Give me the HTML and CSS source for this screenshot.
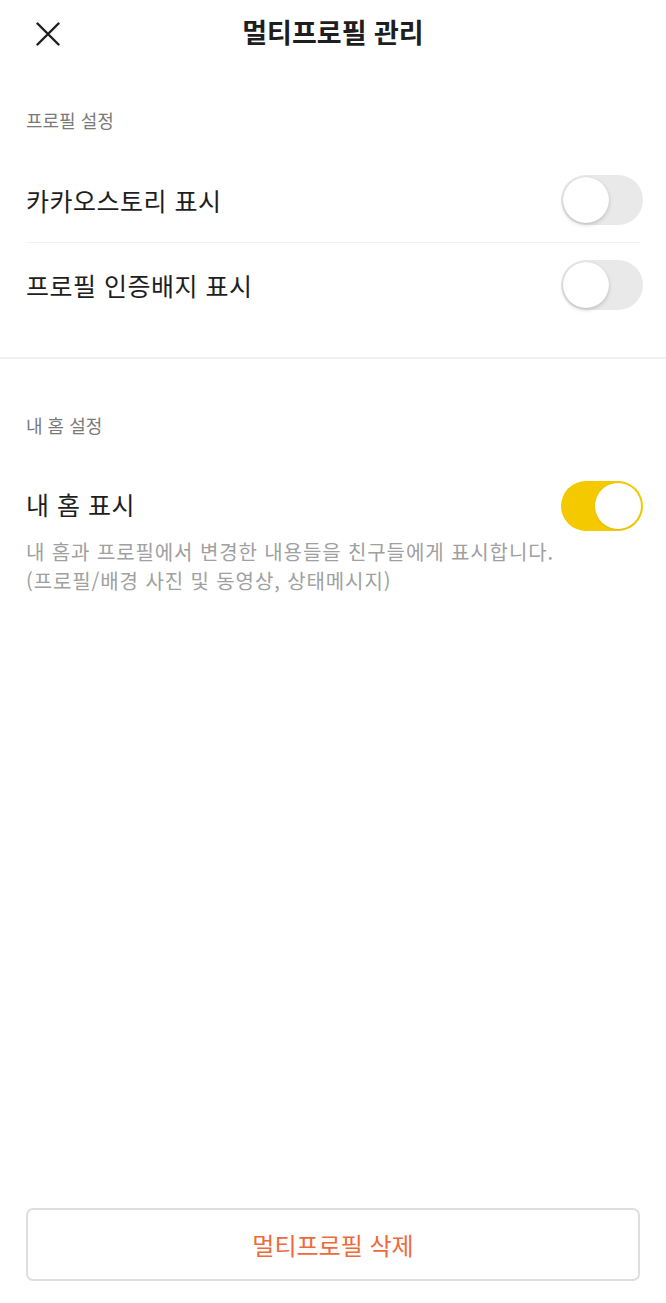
FILE: index.html
```html
<!DOCTYPE html>
<html lang="ko">
<head>
<meta charset="utf-8">
<title>멀티프로필 관리</title>
<link rel="stylesheet" href="styles.css">
</head>
<body>
<div class="page">
  <header class="header">
    <button class="close" aria-label="닫기">
      <svg width="24" height="24" viewBox="0 0 24 24"><path d="M1.5 1.5 L22.5 22.5 M22.5 1.5 L1.5 22.5" stroke="#1e1e1e" stroke-width="2.4" stroke-linecap="round" fill="none"/></svg>
    </button>
    <h1 class="title">멀티프로필 관리</h1>
    <span></span>
  </header>

  <section class="section first">
    <div class="label">프로필 설정</div>
    <div class="rows">
      <div class="row bordered">
        <span class="row-text">카카오스토리 표시</span>
        <span class="toggle"><span class="knob"></span></span>
      </div>
      <div class="row">
        <span class="row-text">프로필 인증배지 표시</span>
        <span class="toggle"><span class="knob"></span></span>
      </div>
    </div>
  </section>

  <div class="section-divider"></div>

  <section class="section second">
    <div class="label">내 홈 설정</div>
    <div class="row short">
      <span class="row-text">내 홈 표시</span>
      <span class="toggle on"><span class="knob"></span></span>
    </div>
    <p class="desc">내 홈과 프로필에서 변경한 내용들을 친구들에게 표시합니다.<br>(프로필/배경 사진 및 동영상, 상태메시지)</p>
  </section>

  <div class="footer">
    <button class="delete">멀티프로필 삭제</button>
  </div>
</div>
</body>
</html>
```

FILE: styles.css
```css
* { box-sizing: border-box; }
html, body { margin: 0; padding: 0; background: #fff; }
body {
  font-family: "Noto Sans CJK KR", "Noto Sans", sans-serif;
  color: #1e1e1e;
}
.page {
  width: 666px;
  min-height: 1303px;
  display: flex;
  flex-direction: column;
}
.header {
  height: 68px;
  display: grid;
  grid-template-columns: 1fr auto 1fr;
  align-items: center;
}
.close {
  justify-self: start;
  margin-left: 36px;
  width: 24px;
  height: 24px;
  padding: 0;
  border: 0;
  background: none;
  display: flex;
}
.title {
  margin: 0 0 4px;
  font-size: 27px;
  font-weight: 700;
  line-height: 34px;
  color: #1e1e1e;
}
.section { padding: 0 26px; }
.section.first { padding-top: 40px; padding-bottom: 30px; }
.label {
  font-size: 18px;
  line-height: 24px;
  color: #7a7a7a;
}
.rows { margin-top: 26px; }
.row {
  height: 84px;
  display: flex;
  align-items: center;
  justify-content: space-between;
  margin-right: -3px;
}
.row.bordered {
  height: 85px;
  border-bottom: 1px solid #f2f2f2;
  margin-right: 0;
}
.row.bordered .toggle { margin-right: -3px; }
.row-text {
  font-size: 25px;
  letter-spacing: 0.5px;
  line-height: 32px;
  color: #1e1e1e;
}
.toggle {
  position: relative;
  width: 82px;
  height: 50px;
  border-radius: 25px;
  background: #e9e9ea;
  flex: none;
}
.knob {
  position: absolute;
  left: 2px;
  top: 2px;
  width: 46px;
  height: 46px;
  border-radius: 50%;
  background: #fff;
  box-shadow: 0 2px 4px rgba(0,0,0,0.16), 0 0 1px rgba(0,0,0,0.12);
}
.toggle.on { background: #f5c900; }
.toggle.on .knob {
  left: 34px;
  box-shadow: 0 1px 2px rgba(0,0,0,0.08);
}
.section-divider {
  height: 2px;
  background: #efefef;
}
.section.second { padding-top: 54px; }
.row.short { height: 62px; margin-top: 38px; }
.row.short .row-text { padding-bottom: 4px; }
.desc {
  margin: 0;
  font-size: 20px;
  letter-spacing: 0.9px;
  line-height: 29px;
  color: #a0a0a0;
}
.footer {
  margin-top: auto;
  padding: 0 26px 22px;
}
.delete {
  display: flex;
  align-items: center;
  justify-content: center;
  width: 100%;
  height: 73px;
  border: 2px solid #dedede;
  border-radius: 7px;
  background: #fff;
  font-family: "Noto Sans CJK KR", "Noto Sans", sans-serif;
  font-size: 24px;
  color: #ee6a3a;
  padding: 0;
}
```
